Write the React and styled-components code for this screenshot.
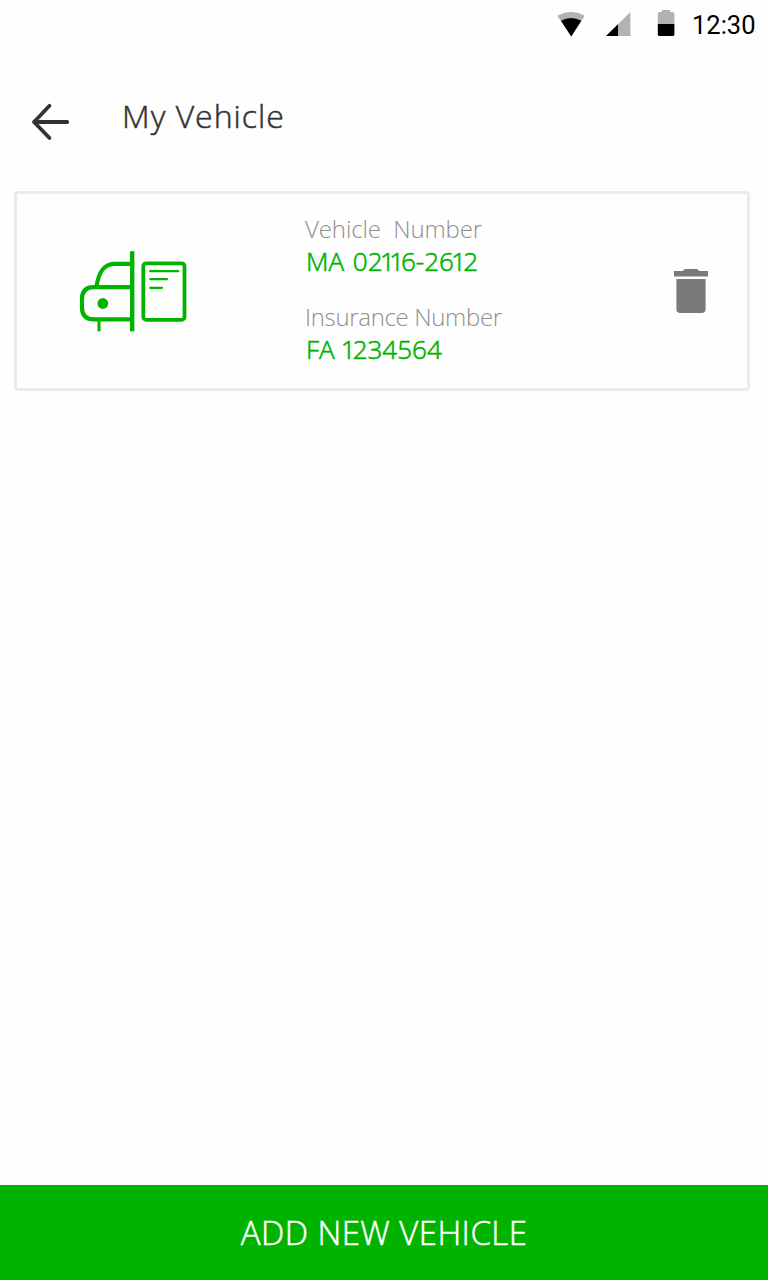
import React from "react";
import styled, { createGlobalStyle } from "styled-components";

const GlobalStyle = createGlobalStyle`
  * { box-sizing: border-box; }
  body { margin: 0; background: #fefefe; }
`;

const Screen = styled.div`
  display: flex;
  flex-direction: column;
  width: 768px;
  height: 1280px;
  background: #fefefe;
  font-family: "Open Sans", "Noto Sans", sans-serif;
`;

const StatusBar = styled.div`
  display: flex;
  justify-content: flex-end;
  align-items: center;
  height: 50px;
  padding-right: 11px;
  svg { display: block; }
`;

const StatusIcons = styled.svg`
  width: 124px;
  height: 50px;
  margin-right: 12px;
`;

const Clock = styled.span`
  width: 65px;
  font: 400 25.5px/50px Roboto, sans-serif;
  color: #000;
  white-space: nowrap;
`;

const Header = styled.header`
  display: flex;
  height: 141px;
  padding: 46px 0 0 30px;
`;

const BackButton = styled.button`
  width: 42px;
  height: 52px;
  padding: 0;
  border: 0;
  background: none;
  svg { display: block; }
`;

const Title = styled.h1`
  margin: 0 0 0 50px;
  font-size: 32px;
  line-height: 40px;
  font-weight: 300;
  letter-spacing: 1px;
  color: #333;
  -webkit-text-stroke: 0.5px #333;
`;

const Card = styled.section`
  display: flex;
  width: 736px;
  height: 200px;
  margin-left: 14px;
  border: 3px solid #ebebeb;
  border-radius: 4px;
  background: #fefefe;
`;

const Picture = styled.div`
  width: 288px;
  padding: 46px 0 0 53px;
  svg { display: block; }
`;

const Details = styled.dl`
  display: flex;
  flex-direction: column;
  gap: 23px;
  width: 356px;
  margin: 0;
  padding-top: 19px;
`;

const Label = styled.dt`
  font-size: 24px;
  line-height: 32px;
  font-weight: 300;
  letter-spacing: ${(p) => p.$spacing};
  color: #8f8f8f;
  white-space: pre;
`;

const Value = styled.dd`
  margin: 0;
  padding-left: 1px;
  font-size: 26px;
  line-height: 33px;
  font-weight: 300;
  letter-spacing: 0;
  word-spacing: ${(p) => p.$wordSpacing};
  color: #00b300;
  -webkit-text-stroke: 0.6px #00b300;
  white-space: nowrap;
`;

const NarrowOne = styled.span`
  margin-left: -2.6px;
  letter-spacing: -3px;
`;

const DeleteButton = styled.button`
  align-self: flex-start;
  width: 60px;
  height: 60px;
  margin-top: 66px;
  padding: 0;
  border: 0;
  background: none;
  svg { display: block; }
`;

const AddButton = styled.button`
  height: 95px;
  margin-top: auto;
  padding: 1px 0 0;
  border: 0;
  background: #00b300;
  color: #fff;
  font-family: inherit;
  font-size: 33px;
  line-height: 94px;
  font-weight: 300;
  letter-spacing: 0.45px;
  -webkit-text-stroke: 0.5px #fff;
`;

const withNarrowOnes = (text) =>
  text.split(/(1)/).map((part, i) =>
    part === "1" ? <NarrowOne key={i}>{part}</NarrowOne> : part
  );

export default function App() {
  return (
    <Screen>
      <GlobalStyle />
      <StatusBar>
        <StatusIcons viewBox="556 0 124 50">
          <path d="M557.4 15.8Q571 8 584.8 15.8L571.2 36.5Z" fill="#b2b2b2" />
          <path d="M561 20.8Q571 15.4 581.4 20.8L571.2 36.5Z" fill="#000" />
          <path d="M606 36L630.4 12V36Z" fill="#b2b2b2" />
          <path d="M606 36L618 24.2V36Z" fill="#000" />
          <path d="M657.8 24V13.6Q657.8 12 659.4 12H662V10H670V12H672.8Q674.4 12 674.4 13.6V24Z" fill="#b2b2b2" />
          <path d="M657.8 24H674.4V34.4Q674.4 36 672.8 36H659.4Q657.8 36 657.8 34.4Z" fill="#000" />
        </StatusIcons>
        <Clock>12:30</Clock>
      </StatusBar>
      <Header>
        <BackButton aria-label="Back">
          <svg width="42" height="52" viewBox="30 96 42 52" fill="none" stroke="#333" strokeWidth="3.8" strokeLinecap="round" strokeLinejoin="round">
            <path d="M49.5 105.8L34 122L49.5 138M34 122H67.2" />
          </svg>
        </BackButton>
        <Title>My Vehicle</Title>
      </Header>
      <Card>
        <Picture>
          <svg width="130" height="100" viewBox="70 240 130 100" fill="none" stroke="#00b300" strokeWidth="4.2">
            <path d="M132.2 251.2V331.4" strokeWidth="4.4" />
            <path d="M132 263.8H114C103 264 98.5 273 96.4 287" />
            <path d="M132 287.2H94Q82 287.2 82 299V307.5Q82 319.4 94 319.4H132" />
            <path d="M99 320V331.4" strokeWidth="3" />
            <circle cx="102.8" cy="303.5" r="5.4" fill="#00b300" stroke="none" />
            <rect x="143.3" y="263.3" width="41.2" height="56.6" rx="3" strokeWidth="3.8" />
            <path d="M150.2 271.2H178.2M150.2 279.1H167M150.2 287.8H162" strokeWidth="2.2" strokeLinecap="round" />
          </svg>
        </Picture>
        <Details>
          <div>
            <Label $spacing="-0.1px">{"Vehicle  Number"}</Label>
            <Value $wordSpacing="2px">{withNarrowOnes("MA 02116-2612")}</Value>
          </div>
          <div>
            <Label $spacing="-0.33px">Insurance Number</Label>
            <Value $wordSpacing="2px">{withNarrowOnes("FA 1234564")}</Value>
          </div>
        </Details>
        <DeleteButton aria-label="Delete vehicle">
          <svg width="60" height="60" viewBox="661 260 60 60" fill="#7a7a7a">
            <path d="M674 271H682.5L685 269H697L699.5 271H708V276.4H674Z" />
            <path d="M676.4 279H705.6V309Q705.6 313 701.6 313H680.4Q676.4 313 676.4 309Z" />
          </svg>
        </DeleteButton>
      </Card>
      <AddButton>ADD NEW VEHICLE</AddButton>
    </Screen>
  );
}
